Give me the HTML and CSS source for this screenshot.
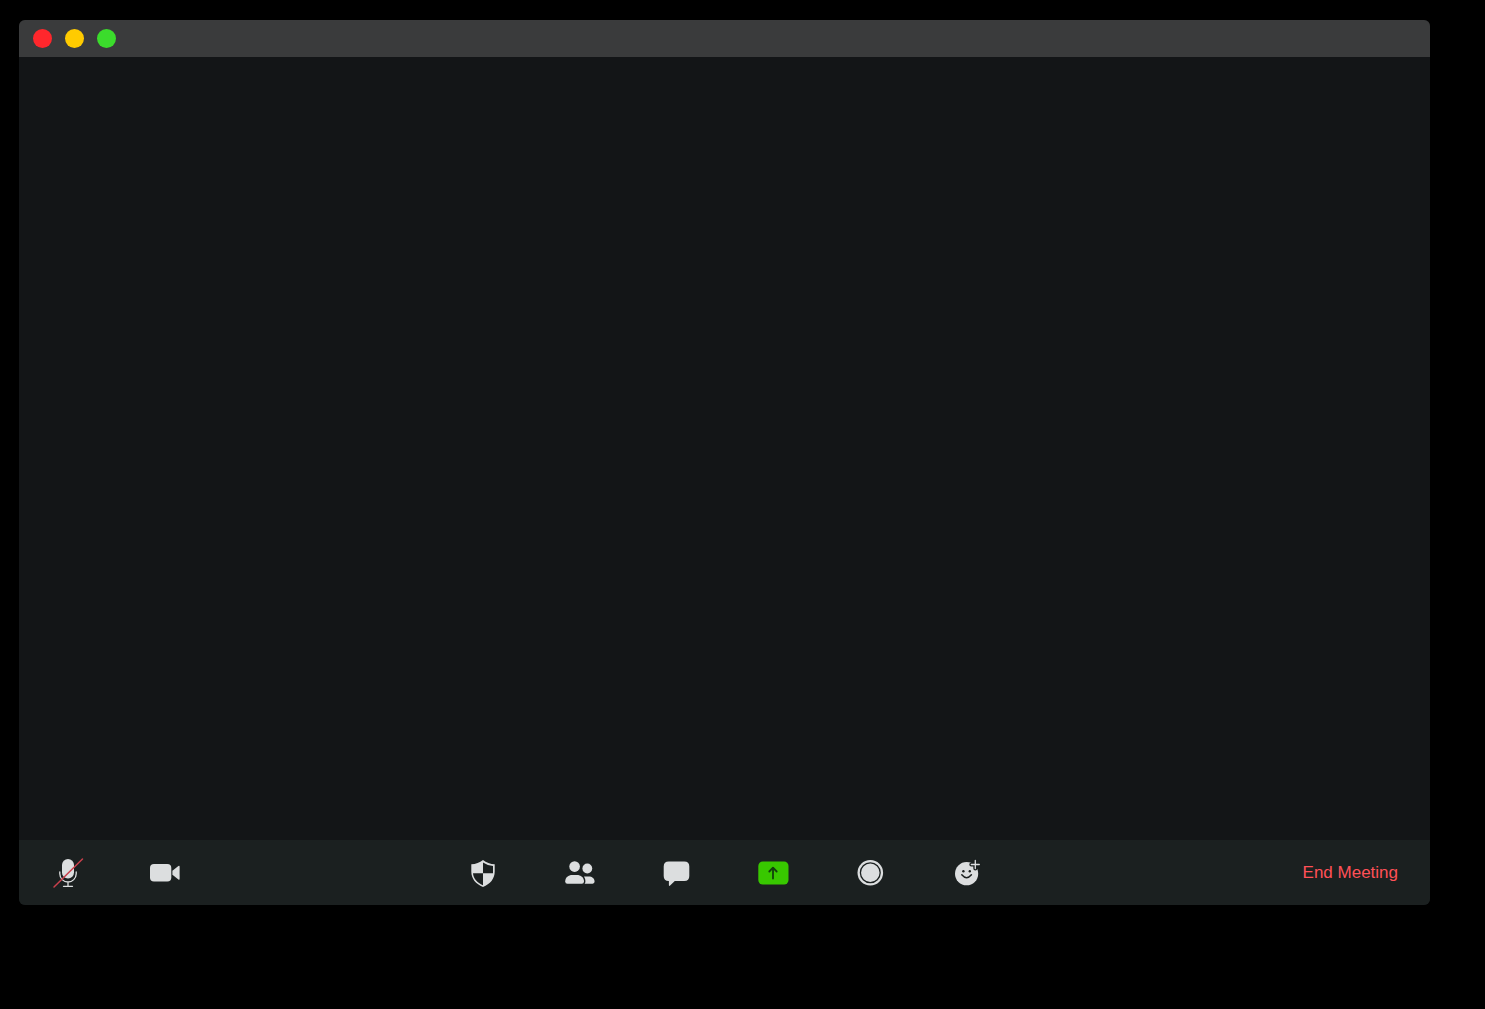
FILE: index.html
```html
<!DOCTYPE html>
<html lang="en">
<head>
    <meta charset="UTF-8">
    <meta name="viewport" content="width=device-width, initial-scale=1.0">
    <title>Meeting</title>
    <link rel="stylesheet" href="styles.css">
</head>
<body>
    <div class="window">
        <header class="titlebar">
            <button class="dot close" aria-label="Close"></button>
            <button class="dot minimize" aria-label="Minimize"></button>
            <button class="dot maximize" aria-label="Maximize"></button>
        </header>

        <main class="stage"></main>

        <footer class="toolbar">
            <div class="group">
                <button class="tool" aria-label="Unmute">
                    <svg viewBox="0 0 41 41">
                        <rect x="14" y="7" width="12" height="19.5" rx="6"/>
                        <path class="line" d="M11.8 20v1.8a8.2 8.2 0 0 0 16.4 0v-1.8M20 30v4M15.5 34.3h9"/>
                        <path class="slash" d="M6 35L34.5 7"/>
                    </svg>
                </button>
                <button class="tool" aria-label="Stop video">
                    <svg viewBox="0 0 41 41">
                        <rect x="5" y="12" width="21.3" height="17.6" rx="4"/>
                        <path d="M27.4 18.8l6-4.7q1.2-.8 1.2.6v12.1q0 1.4-1.2.6l-6-4.7z"/>
                    </svg>
                </button>
            </div>

            <div class="group">
                <button class="tool" aria-label="Security">
                    <svg viewBox="0 0 41 41">
                        <path d="M21 8q5 4 11.7 4.3v7.2c0 7.4-4.5 12.5-11.7 15.5c-7.2-3-11.7-8.1-11.7-15.5v-7.2q6.7-.3 11.7-4.3z"/>
                        <path class="cut" d="M21 10.5q4.5 3.1 10 3.5v7.2h-10zM21 21.2v12c-5.8-2.6-9.6-6.5-10-12z"/>
                    </svg>
                </button>
                <button class="tool" aria-label="Participants">
                    <svg viewBox="0 0 41 41">
                        <circle cx="15.6" cy="14.6" r="5.3"/>
                        <circle cx="28.3" cy="16.5" r="4.9"/>
                        <path d="M6.2 29.5c0-4.4 3.4-6.6 7-6.6h4.8c3.6 0 7 2.2 7 6.6q0 2.2-2.2 2.2h-14.4q-2.2 0-2.2-2.2z"/>
                        <path d="M25 24.6h4.6c3.6 0 6 2 6 5q0 2.1-2 2.1h-8q1-1 .8-2.6-.2-2.6-1.4-4.5z"/>
                    </svg>
                </button>
                <button class="tool" aria-label="Chat">
                    <svg viewBox="0 0 41 41">
                        <path d="M12.7 9.5h15.6q5 0 5 5v9.5q0 5-5 5h-9.500l-4.700 4.600q-1.200 1-1.200-.6v-4h-.2q-5 0-5-5v-9.500q0-5 5-5z"/>
                    </svg>
                </button>
                <button class="tool" aria-label="Share screen">
                    <svg viewBox="0 0 41 41">
                        <rect class="share" x="5.3" y="9.5" width="30.2" height="23" rx="4.5"/>
                        <path class="arrow" d="M20 26.5v-10.5M16.3 19.5l3.7-3.8 3.7 3.8"/>
                    </svg>
                </button>
                <button class="tool" aria-label="Record">
                    <svg viewBox="0 0 41 41">
                        <circle cx="20.3" cy="20.7" r="12.8"/>
                        <circle class="ring" cx="20.3" cy="20.7" r="9.9"/>
                    </svg>
                </button>
                <button class="tool" aria-label="Reactions">
                    <svg viewBox="0 0 41 41">
                        <circle cx="19.6" cy="21.7" r="11.6"/>
                        <path class="halo" d="M28.3 8.5v8M24.3 12.5h8"/>
                        <path class="line" d="M28.3 8.5v8M24.3 12.5h8"/>
                        <circle class="cut" cx="16.4" cy="19.3" r="1.2"/>
                        <circle class="cut" cx="22.8" cy="19.3" r="1.2"/>
                        <path class="smile" d="M14.8 22.8q4.8 5.8 9.6 0"/>
                    </svg>
                </button>
            </div>

            <button class="end">End Meeting</button>
        </footer>
    </div>
</body>
</html>
```

FILE: styles.css
```css
* {
    box-sizing: border-box;
}
body {
    margin: 0;
    height: 100vh;
    padding: 20px 55px 104px 19px;
    background: #000;
    font-family: "Liberation Sans", Arial, sans-serif;
}
button {
    border: 0;
    padding: 0;
    background: none;
    font-family: inherit;
    cursor: pointer;
}
.window {
    display: flex;
    flex-direction: column;
    height: 100%;
    border-radius: 6px;
    overflow: hidden;
    background: #131517;
}
.titlebar {
    display: flex;
    align-items: center;
    gap: 13px;
    height: 37px;
    padding: 0 14px;
    background: #3a3b3c;
}
.dot {
    width: 19px;
    height: 19px;
    border-radius: 50%;
}
.close {
    background: #ff272c;
}
.minimize {
    background: #ffcb00;
}
.maximize {
    background: #3bdc2c;
}
.stage {
    flex: 1;
}
.toolbar {
    display: grid;
    grid-template-columns: 1fr auto 1fr;
    align-items: center;
    height: 65px;
    padding-left: 1px;
    background: #1b2020;
}
.group {
    display: flex;
}
.tool {
    display: flex;
    align-items: center;
    justify-content: center;
    width: 97px;
    height: 65px;
}
.tool svg {
    width: 41px;
    height: 41px;
    fill: #dcdedf;
}
.tool .cut {
    fill: #1b2020;
}
.tool .line,
.tool .slash,
.tool .arrow,
.tool .ring,
.tool .halo,
.tool .smile {
    fill: none;
    stroke: #dcdedf;
    stroke-width: 1.3;
    stroke-linecap: round;
    stroke-linejoin: round;
}
.tool .slash {
    stroke: #c9404c;
    stroke-width: 1.5;
}
.tool .share {
    fill: #38c800;
}
.tool .arrow {
    stroke: #12400c;
    stroke-width: 1.8;
}
.tool .ring {
    stroke: #1b2020;
}
.tool .halo {
    stroke: #1b2020;
    stroke-width: 4;
}
.tool .smile {
    stroke: #1b2020;
    stroke-width: 1.5;
}
.end {
    justify-self: end;
    padding: 8px 32px;
    font-size: 17px;
    line-height: 20px;
    color: #ff5057;
}
```
